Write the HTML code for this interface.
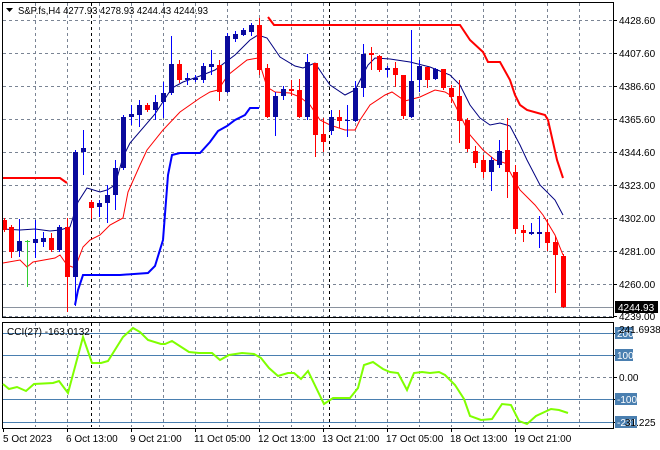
<!DOCTYPE html>
<html><head><meta charset="utf-8"><style>
html,body{margin:0;padding:0;background:#fff;width:660px;height:450px;overflow:hidden}
svg{display:block;font-family:"Liberation Sans",sans-serif;font-size:10px}
</style></head><body>
<svg width="660" height="450" viewBox="0 0 660 450" xmlns="http://www.w3.org/2000/svg">
<rect width="660" height="450" fill="#fff"/>
<g stroke="#7a8494" stroke-width="1" stroke-dasharray="3,3" fill="none">
<path d="M3 20.5H613M3 53.5H613M3 86.5H613M3 119.5H613M3 152.5H613M3 185.5H613M3 218.5H613M3 251.5H613M3 284.5H613M3 316.5H613"/>
<path d="M35.5 3V317M67.5 3V317M99.5 3V317M131.5 3V317M163.5 3V317M195.5 3V317M227.5 3V317M259.5 3V317M291.5 3V317M323.5 3V317M355.5 3V317M387.5 3V317M419.5 3V317M451.5 3V317M483.5 3V317M515.5 3V317M547.5 3V317M579.5 3V317"/>
<path d="M35.5 323V427M67.5 323V427M99.5 323V427M131.5 323V427M163.5 323V427M195.5 323V427M227.5 323V427M259.5 323V427M291.5 323V427M323.5 323V427M355.5 323V427M387.5 323V427M419.5 323V427M451.5 323V427M483.5 323V427M515.5 323V427M547.5 323V427M579.5 323V427M3 377.5H613"/>
</g>
<g stroke="#000" stroke-dasharray="3,3"><path d="M91.5 3V317M91.5 323V427M329.5 3V317M329.5 323V427"/></g>
<path d="M3 307.5H613" stroke="#8a929e"/>
<polyline fill="none" stroke="#ff0000" stroke-width="2" points="3,178 60,178 67,183"/>
<polyline fill="none" stroke="#ff0000" stroke-width="2" points="268,17 274,25 460,25 470,40 483,52 488,62 500,62 510,80 515,95 520,105 527,110 545,115 548,120 557,160 563,178"/>
<polyline fill="none" stroke="#0000ff" stroke-width="2" points="75,305 78,290 83,275 120,275 148,273 155,266 163,240 168,175 172,155 180,153 200,153 210,142 218,131 227,126 235,120 245,115 250,108 259,108"/>
<polyline fill="none" stroke="#ff0000" stroke-width="1" points="3,263 20,260 27,267 33,262 55,258 60,255 67,265 75,268 83,247 90,240 100,235 110,225 123,218 128,192 140,165 147,150 163,130 180,112 200,98 210,92 218,90 228,75 247,60 258,58 267,87 275,92 290,93 300,97 310,105 320,120 330,125 345,130 355,130 360,120 370,105 385,95 392,92 405,101 420,97 435,90 445,92 450,95 460,115 470,135 483,150 495,160 505,163 520,190 535,205 543,215 555,235 563,255"/>
<polyline fill="none" stroke="#000080" stroke-width="1" points="3,229 20,230 35,229 50,231 60,230 70,227 78,202 87,188 100,192 107,190 115,185 123,157 130,143 155,114 172,88 183,82 200,76 215,70 235,55 250,40 258,35 267,38 280,57 295,66 303,68 315,63 323,75 330,85 345,95 355,90 368,65 375,58 390,59 410,62 430,67 450,75 460,85 470,105 480,118 490,125 500,123 510,126 520,145 527,160 540,185 555,200 563,215"/>
<g stroke-width="1">
<g stroke="#ff0000" fill="#ff0000">
<path d="M4.5 218V232M11.5 225V258M51.5 233V252M67.5 218V312M91.5 200V219M147.5 103V112M179.5 60V83M219.5 60V101M259.5 18V75M267.5 64V118M291.5 80V96M299.5 79V118M315.5 63V157M323.5 118V152M339.5 110V128M371.5 47V70M379.5 55V72M395.5 62V87M403.5 75V119M427.5 67V88M443.5 69V90M451.5 85V103M459.5 80V143M467.5 118V152M475.5 146V168M483.5 155V178M507.5 118V198M515.5 165V234M523.5 225V242M547.5 219V251M555.5 236V293M563.5 254V308"/>
<g stroke="none">
<rect x="2" y="220" width="5" height="10"/><rect x="9" y="227" width="5" height="25"/><rect x="49" y="238" width="5" height="12"/><rect x="65" y="227" width="5" height="50"/><rect x="89" y="202" width="5" height="6"/><rect x="145" y="105" width="5" height="5"/><rect x="177" y="64" width="5" height="16"/><rect x="217" y="65" width="5" height="27"/><rect x="257" y="25" width="5" height="45"/><rect x="265" y="68" width="5" height="49"/><rect x="289" y="89" width="5" height="2"/><rect x="297" y="90" width="5" height="27"/><rect x="313" y="63" width="5" height="72"/><rect x="321" y="134" width="5" height="8"/><rect x="337" y="117" width="5" height="4"/><rect x="369" y="53" width="5" height="2"/><rect x="377" y="56" width="5" height="14"/><rect x="393" y="68" width="5" height="7"/><rect x="401" y="75" width="5" height="41"/><rect x="425" y="67" width="5" height="13"/><rect x="441" y="69" width="5" height="19"/><rect x="449" y="88" width="5" height="9"/><rect x="457" y="96" width="5" height="25"/><rect x="465" y="120" width="5" height="29"/><rect x="473" y="151" width="5" height="12"/><rect x="481" y="160" width="5" height="12"/><rect x="505" y="150" width="5" height="22"/><rect x="513" y="172" width="5" height="57"/><rect x="521" y="230" width="5" height="3"/><rect x="545" y="232" width="5" height="11"/><rect x="553" y="242" width="5" height="13"/><rect x="561" y="256" width="5" height="51"/>
</g></g>
<g stroke="#0000ff">
<path d="M19.5 219V257M35.5 220V258M43.5 232V247M59.5 225V252M75.5 150V306M83.5 130V175M99.5 200V217M107.5 185V223M115.5 160V210M123.5 115V170M131.5 105V125M139.5 100V127M155.5 95V120M163.5 82V118M171.5 36V95M187.5 73V85M195.5 75V82M203.5 63V83M211.5 50V75M227.5 33V93M235.5 31V42M243.5 28V36M251.5 23V36M275.5 92V136M283.5 86V100M307.5 54V120M331.5 110V135M347.5 105V137M355.5 81V122M363.5 44V97M387.5 66V77M411.5 30V118M419.5 60V92M435.5 68V80M491.5 157V191M499.5 140V168M531.5 223V235M539.5 216V248"/>
</g>
<g fill="#0a0a9c" stroke="none">
<rect x="17" y="241" width="5" height="10"/><rect x="33" y="239" width="5" height="4"/><rect x="41" y="238" width="5" height="4"/><rect x="57" y="227" width="5" height="23"/><rect x="73" y="152" width="5" height="125"/><rect x="81" y="148" width="5" height="4"/><rect x="97" y="203" width="5" height="4"/><rect x="105" y="195" width="5" height="8"/><rect x="113" y="168" width="5" height="27"/><rect x="121" y="117" width="5" height="51"/><rect x="129" y="114" width="5" height="3"/><rect x="137" y="105" width="5" height="10"/><rect x="153" y="102" width="5" height="8"/><rect x="161" y="93" width="5" height="9"/><rect x="169" y="64" width="5" height="29"/><rect x="185" y="78" width="5" height="2"/><rect x="193" y="78" width="5" height="2"/><rect x="201" y="66" width="5" height="14"/><rect x="209" y="64" width="5" height="3"/><rect x="225" y="36" width="5" height="56"/><rect x="233" y="34" width="5" height="5"/><rect x="241" y="30" width="5" height="5"/><rect x="249" y="25" width="5" height="7"/><rect x="273" y="96" width="5" height="21"/><rect x="281" y="89" width="5" height="7"/><rect x="305" y="62" width="5" height="55"/><rect x="329" y="117" width="5" height="14"/><rect x="345" y="120" width="5" height="1"/><rect x="353" y="88" width="5" height="33"/><rect x="361" y="54" width="5" height="34"/><rect x="385" y="68" width="5" height="2"/><rect x="409" y="81" width="5" height="36"/><rect x="417" y="66" width="5" height="14"/><rect x="433" y="69" width="5" height="10"/><rect x="489" y="160" width="5" height="12"/><rect x="497" y="151" width="5" height="14"/><rect x="529" y="232" width="5" height="2"/><rect x="537" y="232" width="5" height="2"/>
</g>
<path d="M27.5 240V287M25 241.5H30" stroke="#32cd32"/>
</g>
<rect x="2.5" y="2.5" width="611" height="315" fill="none" stroke="#000"/>
<rect x="2.5" y="322.5" width="611" height="106" fill="none" stroke="#000"/>
<g stroke="#4a7fb0"><path d="M3 333.5H613M3 355.5H613M3 399.5H613M3 422.5H613"/></g>
<polyline fill="none" stroke="#7fff00" stroke-width="2" points="3,384 9,389 17,387 26,391 34,384 53,383 59,381 68,393 83,337 92,363 101,363 108,361 123,337 133,328 140,332 148,340 161,344 165,344 172,341 189,352 199,353 212,353 220,360 229,355 242,353 254,354 261,358 269,368 278,376 288,373 294,373 301,379 308,371 324,404 333,398 350,398 358,388 364,365 373,362 383,369 390,372 398,373 407,390 414,373 422,372 430,373 439,372 445,375 455,385 464,399 470,416 481,420 492,419 502,404 511,405 519,421 527,424 536,416 551,409 559,410 568,413"/>
<path d="M6 8H13L9.5 12Z" fill="#000"/>
<text x="18" y="14" fill="#000" textLength="190" lengthAdjust="spacingAndGlyphs">S&amp;P.fs,H4  4277.93 4278.93 4244.43 4244.93</text>
<text x="7" y="335" fill="#000">CCI(27) -163.0132</text>
<g fill="#000">
<text x="619" y="24">4428.60</text><text x="619" y="57">4407.60</text><text x="619" y="90">4386.60</text><text x="619" y="123">4365.60</text><text x="619" y="156">4344.60</text><text x="619" y="189">4323.00</text><text x="619" y="222">4302.00</text><text x="619" y="255">4281.00</text><text x="619" y="288">4260.00</text><text x="619" y="320">4239.00</text>
</g>
<path d="M614 20.5h3M614 53.5h3M614 86.5h3M614 119.5h3M614 152.5h3M614 185.5h3M614 218.5h3M614 251.5h3M614 284.5h3M614 316.5h3M614 333.5h3M614 355.5h3M614 377.5h3M614 399.5h3M614 422.5h3" stroke="#000"/>
<rect x="615" y="301" width="43" height="12" fill="#000"/>
<text x="618" y="311" fill="#fff">4244.93</text>
<g fill="#4a7fb0"><rect x="615" y="327" width="18" height="12"/><rect x="615" y="349" width="18" height="12"/><rect x="615" y="393" width="22" height="12"/><rect x="615" y="416" width="22" height="12"/></g>
<g fill="#fff"><text x="617" y="337">200</text><text x="617" y="359">100</text><text x="617" y="403">-100</text><text x="617" y="426">-231</text></g>
<g fill="#000"><text x="619" y="333">241.6938</text><text x="619" y="381">0.00</text><text x="625" y="426">31.225</text></g>
<path d="M3.5 429v3M67.5 429v3M131.5 429v3M195.5 429v3M259.5 429v3M323.5 429v3M387.5 429v3M451.5 429v3M515.5 429v3" stroke="#000"/>
<g fill="#000"><text x="3" y="442">5 Oct 2023</text><text x="66" y="442">6 Oct 13:00</text><text x="130" y="442">9 Oct 21:00</text><text x="194" y="442">11 Oct 05:00</text><text x="258" y="442">12 Oct 13:00</text><text x="322" y="442">13 Oct 21:00</text><text x="386" y="442">17 Oct 05:00</text><text x="450" y="442">18 Oct 13:00</text><text x="514" y="442">19 Oct 21:00</text></g>
</svg>
</body></html>
